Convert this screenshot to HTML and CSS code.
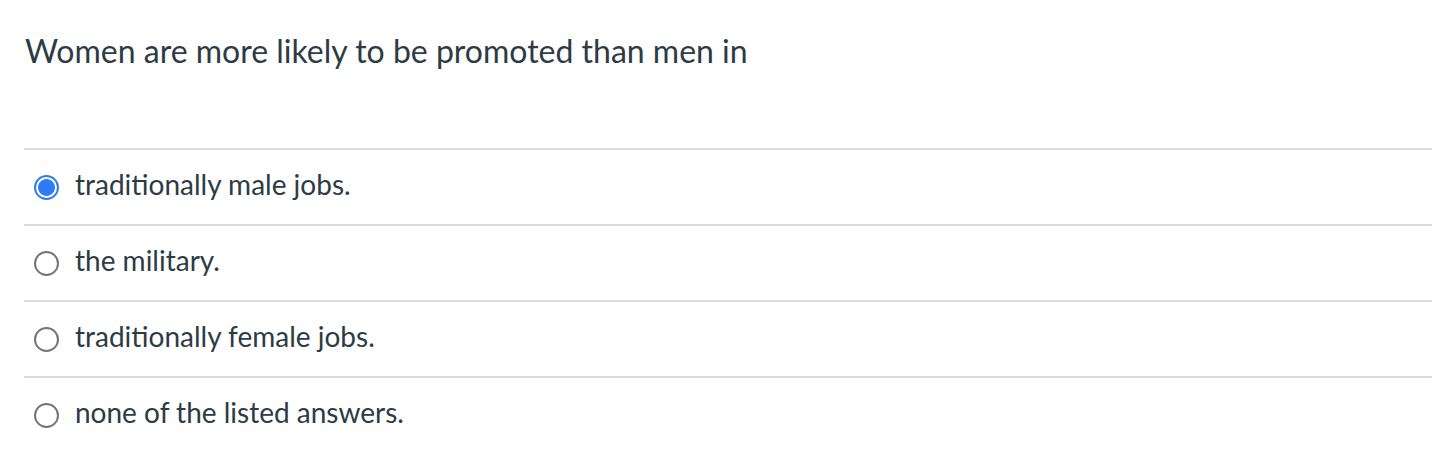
FILE: index.html
```html
<!DOCTYPE html>
<html>
<head>
<meta charset="utf-8">
<link rel="stylesheet" href="styles.css">
</head>
<body>
<div class="question">
  <div class="question-text">Women are more likely to be promoted than men in</div>
  <div class="answers">
    <label class="answer"><span class="radio selected"></span><span class="answer-text">traditionally male jobs.</span></label>
    <label class="answer"><span class="radio"></span><span class="answer-text">the military.</span></label>
    <label class="answer"><span class="radio"></span><span class="answer-text">traditionally female jobs.</span></label>
    <label class="answer"><span class="radio"></span><span class="answer-text">none of the listed answers.</span></label>
  </div>
</div>
</body>
</html>
```

FILE: styles.css
```css
html, body {
  margin: 0;
  padding: 0;
  background: #ffffff;
}
body {
  font-family: Lato, "Noto Sans", sans-serif;
  color: #2d3b45;
}
.question {
  padding: 0 20px 0 24px;
}
.question-text {
  font-size: 32px;
  line-height: 40px;
  padding-top: 31px;
  padding-left: 1px;
  height: 148px;
  box-sizing: border-box;
}
.answers {
  display: flex;
  flex-direction: column;
}
.answer {
  display: flex;
  align-items: center;
  height: 74px;
  border-top: 2px solid #dcdcdc;
  padding-left: 10px;
}
.radio {
  box-sizing: border-box;
  width: 25px;
  height: 25px;
  border-radius: 50%;
  border: 2px solid #757575;
  margin-right: 16px;
  flex: none;
}
.radio.selected {
  border: 2px solid #2f7bf5;
  background: radial-gradient(circle, #2f7bf5 0 8px, #ffffff 8.8px);
}
.answer-text {
  font-size: 28px;
  line-height: 34px;
  padding-bottom: 6px;
}
```
